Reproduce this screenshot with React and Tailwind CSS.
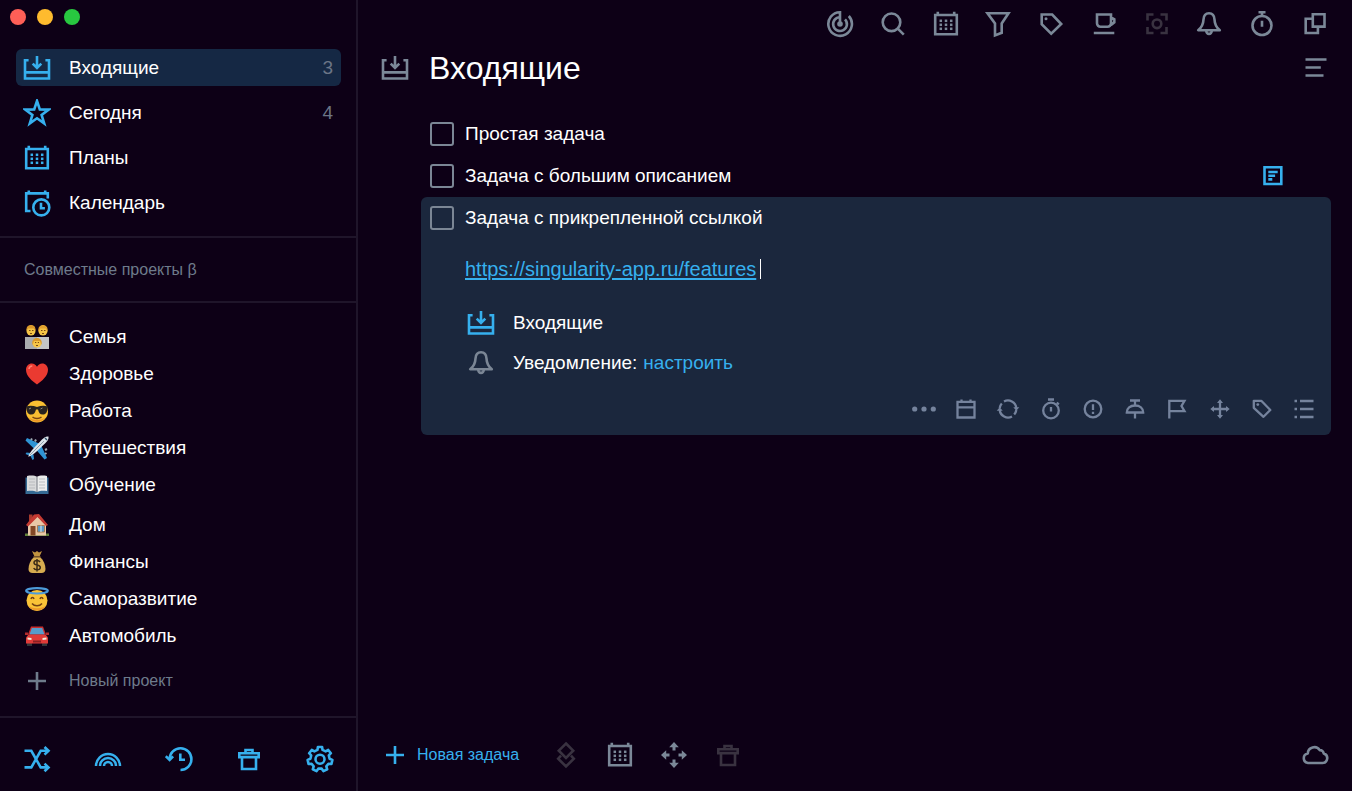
import clsx from "clsx";

function gearPath(cx, cy) {
  const teeth = 7;
  const step = (Math.PI * 2) / teeth;
  const profile = [
    [-0.3, 9.6],
    [-0.19, 12.4],
    [0.19, 12.4],
    [0.3, 9.6],
  ];
  const points = [];
  for (let i = 0; i < teeth; i++) {
    profile.forEach(([offset, r]) => {
      const a = -Math.PI / 2 + i * step + offset * step;
      points.push(`${(cx + r * Math.cos(a)).toFixed(2)} ${(cy + r * Math.sin(a)).toFixed(2)}`);
    });
  }
  return `M${points.join("L")}Z`;
}

function Dots({ xs, ys, size = 2.5 }) {
  return ys.map((y) =>
    xs.map((x) => (
      <rect
        key={`${x}-${y}`}
        x={x - size / 2}
        y={y - size / 2}
        width={size}
        height={size}
        fill="currentColor"
        stroke="none"
      />
    ))
  );
}

// 28px grid
const icons = {
  inbox: (
    <>
      <path d="M5.6 6.3H2V24.500h24V6.300h-3.600M2 18.400h24" />
      <path d="M14 2v12M9.700 9.700l4.300 4.300 4.300-4.300" />
    </>
  ),
  star: (
    <path d="M14 2l2.800 8.500 8.900.1-7.100 5.300 2.600 8.500-7.200-5.100-7.200 5.100 2.600-8.500-7.100-5.300 8.900-.1z" />
  ),
  calendar: (
    <>
      <path d="M3.2 5h21.600v19.300H3.200zM5.800 5V1.800M22.200 5V1.800" />
      <Dots xs={[8.8, 14, 19.2]} ys={[10.8, 14.8, 18.8]} />
    </>
  ),
  calendarClock: (
    <>
      <path d="M7.500 22H3.200V4.400h21.600v5.200M5.800 4.400V1.400M22.200 4.400V1.400" />
      <circle cx="18.300" cy="18.400" r="8" />
      <path d="M18 13.700v5.500h3.900" />
    </>
  ),
  shuffle: (
    <>
      <path d="M1.500 5.800h6.800l9.400 16.600H25M1.500 22.400h6.800l9.400-16.600H25" />
      <path d="M21.500 2l4 3.800-4 3.800M21.500 18.600l4 3.800-4 3.800" />
    </>
  ),
  rainbow: (
    <path d="M2 21a12 12 0 0124 0M6 21a8 8 0 0116 0M10 21a4 4 0 018 0" strokeWidth="2.500" />
  ),
  history: (
    <>
      <path d="M4.600 14A10.900 10.900 0 1115.500 25" />
      <path d="M.8 11.300l3.800 3.700 3.500-3.700M15.300 8.500v6.200h4.700" />
    </>
  ),
  trash: (
    <path d="M4.300 8.300h19.400v3.800H4.300zM7 12.100V24h14V12.100M10.500 8.300V5h7v3.300" />
  ),
  gear: (
    <>
      <path d={gearPath(14, 14.2)} strokeLinejoin="round" />
      <circle cx="14" cy="14.200" r="4.500" />
    </>
  ),
  radar: (
    <>
      <path d="M14 14V2.200A11.800 11.800 0 1022.800 6" />
      <path d="M14 7.200A6.900 6.900 0 1019 9.300" />
      <circle cx="14" cy="14" r="2.800" fill="currentColor" stroke="none" />
    </>
  ),
  search: (
    <>
      <circle cx="12.500" cy="12.300" r="8.800" />
      <path d="M18.800 18.600l6 6" />
    </>
  ),
  filter: <path d="M3.500 3.300h21l-6.800 10.200v9.300l-6.700 2.600V13.500z" />,
  tag: (
    <>
      <path d="M4.700 4.500h10.500l9 9.500-10 9.600-9.500-9.400z" />
      <circle cx="9" cy="8.800" r="1.500" fill="currentColor" stroke="none" />
    </>
  ),
  cup: (
    <path d="M7 4.500h14v8.800a3.500 3.500 0 01-3.500 3.500h-7A3.500 3.500 0 017 13.300zM21 7.500l3.300 1.800v3L21 15M3.800 23h20.500" />
  ),
  focus: (
    <>
      <path d="M4.500 10.500v-6h6M17.500 4.500h6v6M23.500 17v6h-6M10.500 23h-6v-6" />
      <circle cx="14" cy="13.800" r="4.300" />
    </>
  ),
  bell: (
    <>
      <path
        d="M14 3.200c-3.600 0-5.300 2.600-5.500 6.300-.2 5.300-1.600 7.800-5.300 10.800h21.600c-3.700-3-5.100-5.500-5.300-10.800-.2-3.700-1.900-6.300-5.500-6.300z"
        strokeLinejoin="round"
      />
      <path d="M11.300 21a2.700 2.900 0 005.400 0" />
    </>
  ),
  stopwatch: (
    <>
      <circle cx="14" cy="15.500" r="9.500" />
      <path d="M10.500 2.200h7M14 2.500V6M14 10.800v6" />
    </>
  ),
  copy: <path d="M11.800 4.300h11.700v12.300H11.800zM11.800 8.700H4.700V23h12.200v-6.400" />,
  sort: <path d="M4.500 5.500h21M4.500 13.500h15.300M4.500 21.500h18" />,
  plus: <path d="M14 5v18M5 14h18" />,
  layers: <path d="M14 2.500l7.200 7.200-7.200 7.200-7.200-7.200zM9 14.700l-2.800 3 7.800 7.800 7.800-7.800-2.800-3" />,
  move: (
    <g fill="currentColor" stroke="none">
      <path d="M14 1l4.800 5.200h-3.300v3.300h-3V6.200H9.200z" />
      <path d="M14 27l4.800-5.200h-3.300v-3.300h-3v3.300H9.200z" />
      <path d="M1 14l5.200-4.800v3.300h3.300v3H6.200v3.300z" />
      <path d="M27 14l-5.200-4.800v3.300h-3.300v3h3.300v3.300z" />
    </g>
  ),
  cloud: (
    <path
      d="M7 22h14.500a4.900 4.900 0 001.200-9.600 3.700 3.700 0 00-4-3.300 6.500 6.500 0 00-11.900 3.400A4.800 4.800 0 007 22z"
      strokeLinejoin="round"
    />
  ),
  note: <path d="M5.500 5.200h16.800v16.800H5.500zM9.300 10h9.400M9.300 13.700h6.800M9.300 17.400h4" />,
};

// 24px grid, used in the task toolbar
const smallIcons = {
  more: (
    <g fill="currentColor" stroke="none">
      <circle cx="2.700" cy="12" r="2.600" />
      <circle cx="12" cy="12" r="2.600" />
      <circle cx="21.300" cy="12" r="2.600" />
    </g>
  ),
  date: <path d="M3.500 4.800h17v15.700h-17zM3.500 10.300h17M7.500 5V2.500M16.500 5V2.500" />,
  repeat: (
    <>
      <path d="M8 4.500a8.400 8.400 0 0112.300 6.500M16 19.500A8.400 8.400 0 013.700 13M5.800 6.500A8.400 8.400 0 003.700 11M18.200 17.500a8.400 8.400 0 002.100-4.500" />
      <path
        d="M17.300 10.300h6L20.300 13.800zM6.700 13.700h-6l3-3.500z"
        fill="currentColor"
        stroke="none"
      />
    </>
  ),
  timer: (
    <>
      <circle cx="12" cy="13.500" r="7.800" />
      <path d="M9 2.500h6M12 10v4.500M17.800 5.500l2 2" />
    </>
  ),
  priority: (
    <>
      <circle cx="12" cy="12" r="8.300" />
      <path d="M12 7.300v5.700M12 14.800V17" />
    </>
  ),
  pin: <path d="M7 3.500h10M12 3.500v5M3.800 15.500c0-4.200 3.400-7 8.200-7s8.200 2.800 8.200 7zM12 15.500v6" />,
  flag: <path d="M4.300 21.500V3.800h15.200l-3 5.200 3 5.200H4.300" />,
  cross: (
    <>
      <path d="M12 4v16M4 12h16" />
      <path
        d="M12 2.300l3 3.700H9zM12 21.700L15 18H9zM2.300 12L6 9v6zM21.700 12L18 9v6z"
        fill="currentColor"
        stroke="none"
      />
    </>
  ),
  label: (
    <>
      <path d="M3.800 3.800h7.500l9 9.200-6.800 6.800-9.700-9z" strokeLinejoin="round" />
      <circle cx="7.800" cy="7.600" r="1.400" fill="currentColor" stroke="none" />
    </>
  ),
  list: <path d="M8 4h13.500M8 12h13.500M8 20h13.500M2.500 4H5M2.500 12H5M2.500 20H5" />,
};

// 24px grid
const emoji = {
  family: (
    <>
      <path d="M0 12h24v12H0z" fill="#a9abae" />
      <path d="M12 12h12v12H12z" fill="#c3c4c6" />
      <circle cx="6" cy="6" r="4.500" fill="#f6c446" />
      <path d="M1.500 6C1 1.500 3.500 0 6 0s5 1.500 4.500 6L9 3.500H3z" fill="#d9982b" />
      <circle cx="18" cy="6" r="4.500" fill="#f6c446" />
      <path d="M13.500 7c-.8-5 1.500-7 4.500-7s5.300 2 4.500 7L21 3.500h-6z" fill="#e2a22f" />
      <path d="M4 5.500h1.500M7 5.500h1.500M16 5.500h1.500M19 5.500h1.500M5 8.500h2M17 8.500h2" stroke="#7b4a12" />
      <circle cx="12" cy="18" r="4.500" fill="#f6c446" />
      <path d="M7.500 20c-1-5 1.500-7 4.500-7s5.500 2 4.500 7L15 16H9z" fill="#d9982b" />
      <path d="M10 17.500h1.300M12.800 17.500H14M11 20.500h2" stroke="#7b4a12" />
    </>
  ),
  heart: (
    <>
      <path
        d="M12 22.500C7 19 1 14 1 7.800 1 4 3.600 1.500 6.800 1.500c2.300 0 4.200 1.300 5.200 3.300 1-2 2.900-3.300 5.200-3.300C20.400 1.500 23 4 23 7.800 23 14 17 19 12 22.500z"
        fill="#ea3a31"
      />
      <path d="M4 7c.3-2 1.500-3 3.300-3" stroke="#ff8272" strokeWidth="1.600" fill="none" />
    </>
  ),
  sunglasses: (
    <>
      <circle cx="12" cy="12.500" r="11" fill="#f9bf32" />
      <path d="M3 18a11 11 0 0018 0c-4 4-14 4-18 0z" fill="#ec9528" />
      <path
        d="M1 7.500c4-1 7-.8 11 .5 4-1.300 7-1.500 11-.5l-.5 2.500c-.6 4-2 5.500-4.700 5.500-3 0-4-2-4.800-5h-2c-.8 3-1.800 5-4.800 5C3.500 15.500 2 14 1.500 10z"
        fill="#28231f"
      />
      <path d="M4 10l2-1M15.500 10l2-1" stroke="#8b8580" />
      <path d="M7.500 18c2.500 2 6.500 2 9 0" stroke="#7b4413" strokeWidth="1.500" fill="none" />
    </>
  ),
  plane: (
    <>
      <path d="M15 8L2 2 .5 4.500l9.500 9zM16 9l6 13-2.500 1.500-8.500-10z" fill="#2f94d5" />
      <path d="M6 17l-4.500-.5L.5 18l5 2 2 4 1.500-1-.5-4.500z" fill="#318fce" />
      <path
        d="M23.500.5c-2.500-.5-4.700 1-6.500 3L8 13c-2 2.300-4 5-4.800 7.800C6 20 8.700 18 11 16l9.500-9c2-1.800 3.500-4 3-6.500z"
        fill="#dce4eb"
      />
      <path d="M5 19L19 5" stroke="#8f9dab" />
      <path d="M20 2l2 2" stroke="#31506b" strokeWidth="1.500" />
      <path d="M7 2.500L6 4M11 3.500l-1 2M22 13l-2 1M21.500 17l-1.500 1" stroke="#9da8b2" strokeWidth="2" />
    </>
  ),
  book: (
    <>
      <path d="M.5 4.500h23V21H.5z" fill="#356a94" />
      <path d="M2 3c4-.8 8-.5 10 .8V19c-3-1.500-6-1.500-10-1z" fill="#d9dadb" />
      <path d="M22 3c-4-.8-8-.5-10 .8V19c3-1.500 6-1.500 10-1z" fill="#eceded" />
      <path d="M12 4v15" stroke="#777d84" />
      <path d="M4 6h6M4 9h6M4 12h6M4 15h6M14 6h6M14 9h6M14 12h6M14 15h6" stroke="#b1b4b7" strokeWidth=".8" />
    </>
  ),
  house: (
    <>
      <path d="M0 20.500h24V23H0z" fill="#62813a" />
      <path d="M4 1.500h3.500V9H4z" fill="#a63a2d" />
      <path d="M3 10l9-7 9 9v10.500H3z" fill="#e9c8a7" />
      <path d="M1 12L9 1.500l5-.5 9 11-2 1-8.500-9L3 13.500z" fill="#c43a32" />
      <path d="M5.500 13h5v9.500h-5z" fill="#824826" />
      <path d="M12.500 12.500h7V19h-7z" fill="#5d9bc4" stroke="#a67d57" />
      <path d="M16 12.500V19" stroke="#dcecf6" />
    </>
  ),
  money: (
    <>
      <path d="M7 1l3 1.500L12 1l2 1.500L17 1l-2.500 5.500h-5z" fill="#c29440" />
      <path
        d="M9 7h6c3.500 3 5.500 7.500 5.500 12 0 2.800-1.500 4-4 4h-9c-2.500 0-4-1.200-4-4C3.500 14.500 5.500 10 9 7z"
        fill="#d7ac50"
      />
      <path d="M8.500 6.800h7" stroke="#77542a" strokeWidth="1.500" />
      <path
        d="M15 12c-.7-1.200-1.800-1.500-3-1.500-1.700 0-3 .8-3 2.200 0 3.300 6.300 1.500 6.300 4.800 0 1.500-1.500 2.300-3.200 2.300-1.500 0-2.800-.5-3.400-1.800M12 9v12.500"
        stroke="#3b2c17"
        strokeWidth="1.500"
        fill="none"
      />
    </>
  ),
  halo: (
    <>
      <circle cx="12" cy="13.500" r="10.500" fill="#fac337" />
      <path d="M3 18.500a10.500 10.500 0 0018 0c-4 3.500-14 3.500-18 0z" fill="#ee9a2b" />
      <ellipse cx="12" cy="3.800" rx="10.800" ry="2.700" fill="none" stroke="#4d9bda" strokeWidth="2.200" />
      <path
        d="M6 12c.5-2 2.500-2 3 0M15 12c.5-2 2.500-2 3 0M7 16.500c2.500 3 7.500 3 10 0"
        stroke="#744112"
        strokeWidth="1.500"
        fill="none"
      />
    </>
  ),
  car: (
    <>
      <path d="M2 17h5v5H2zM17 17h5v5h-5z" fill="#33363b" />
      <path d="M6 2.500h12l3 8H3z" fill="#c92c2c" />
      <path d="M6.800 4h10.400l2.300 6.500h-15z" fill="#579ccb" />
      <path d="M0 8.500h3V11H0zM21 8.500h3V11h-3z" fill="#b32b2c" />
      <path d="M3.500 10.500h17l2.500 3v6H1v-6z" fill="#e13a38" />
      <path d="M2.500 13.500l4 .5v2l-4-.5zM21.500 13.500l-4 .5v2l4-.5z" fill="#f5ead6" />
      <path d="M8 16.500h8v2H8z" fill="#8b2023" />
    </>
  ),
};

function Icon({ name, className }) {
  return (
    <svg
      viewBox="0 0 28 28"
      fill="none"
      stroke="currentColor"
      strokeWidth="2.600"
      aria-hidden="true"
      className={clsx("size-7 shrink-0", className)}
    >
      {icons[name]}
    </svg>
  );
}

function SmallIcon({ name }) {
  return (
    <svg
      viewBox="0 0 24 24"
      fill="none"
      stroke="currentColor"
      strokeWidth="2.300"
      aria-hidden="true"
      className="size-6 shrink-0"
    >
      {smallIcons[name]}
    </svg>
  );
}

const navItems = [
  { label: "Входящие", icon: "inbox", count: 3, active: true },
  { label: "Сегодня", icon: "star", count: 4 },
  { label: "Планы", icon: "calendar" },
  { label: "Календарь", icon: "calendarClock" },
];

const projectGroups = [
  [
    { label: "Семья", icon: "family" },
    { label: "Здоровье", icon: "heart" },
    { label: "Работа", icon: "sunglasses" },
    { label: "Путешествия", icon: "plane" },
    { label: "Обучение", icon: "book" },
  ],
  [
    { label: "Дом", icon: "house" },
    { label: "Финансы", icon: "money" },
    { label: "Саморазвитие", icon: "halo" },
    { label: "Автомобиль", icon: "car" },
  ],
];

const sidebarActions = ["shuffle", "rainbow", "history", "trash", "gear"];

const toolbar = [
  "radar",
  "search",
  "calendar",
  "filter",
  "tag",
  "cup",
  "focus",
  "bell",
  "stopwatch",
  "copy",
];

const taskActions = [
  "more",
  "date",
  "repeat",
  "timer",
  "priority",
  "pin",
  "flag",
  "cross",
  "label",
  "list",
];

const footerActions = [
  { icon: "layers", disabled: true },
  { icon: "calendar" },
  { icon: "move" },
  { icon: "trash", disabled: true },
];

function Sidebar() {
  return (
    <aside className="w-[358px] shrink-0 flex flex-col border-r-2 border-[#1f152a]">
      <div className="flex gap-[11px] px-[10px] pt-[9px] pb-6">
        <span className="size-4 rounded-full bg-[#fe5f57]" />
        <span className="size-4 rounded-full bg-[#febb2e]" />
        <span className="size-4 rounded-full bg-[#28c740]" />
      </div>

      <nav className="flex flex-col gap-2 pl-4 pr-[15px] pb-[15px]">
        {navItems.map((item) => (
          <a
            key={item.label}
            href="#"
            className={clsx(
              "flex items-center h-[37px] pl-[7px] pr-2 rounded-md",
              item.active && "bg-[#152844]"
            )}
          >
            <Icon name={item.icon} className="text-[#36b0ee]" />
            <span className="ml-[18px] flex-1">{item.label}</span>
            {item.count && <span className="text-[#6b7586]">{item.count}</span>}
          </a>
        ))}
      </nav>

      <div className="flex items-center h-[63px] px-6 border-y-2 border-[#1f152a] box-content text-base text-[#6e7b8b]">
        Совместные проекты β
      </div>

      <div className="flex flex-col gap-[3px] pt-[15px]">
        {projectGroups.map((group, i) => (
          <ul key={i}>
            {group.map((project) => (
              <li key={project.label}>
                <a href="#" className="flex items-center h-[37px] px-[25px]">
                  <svg viewBox="0 0 24 24" aria-hidden="true" className="size-6 shrink-0">
                    {emoji[project.icon]}
                  </svg>
                  <span className="ml-5">{project.label}</span>
                </a>
              </li>
            ))}
          </ul>
        ))}
      </div>
      <button
        type="button"
        className="flex items-center h-[37px] mt-2 px-[23px] text-base text-[#6e7b8b]"
      >
        <Icon name="plus" />
        <span className="ml-[18px]">Новый проект</span>
      </button>

      <div className="mt-auto flex justify-between pt-[27px] pb-[18px] pl-[23px] pr-[22px] border-t-2 border-[#1f152a] text-[#36b0ee]">
        {sidebarActions.map((name) => (
          <button key={name} type="button" aria-label={name}>
            <Icon name={name} />
          </button>
        ))}
      </div>
    </aside>
  );
}

function TaskRow({ id, title, children }) {
  return (
    <div className="flex items-center h-[42px] pl-[9px] pr-[44px]">
      <input
        id={id}
        type="checkbox"
        className="appearance-none size-6 shrink-0 rounded-[3px] border-2 border-[#7b8695]"
      />
      <label htmlFor={id} className="ml-[11px] flex-1">
        {title}
      </label>
      {children}
    </div>
  );
}

function OpenTask() {
  return (
    <div className="rounded-md bg-[#1b273d]">
      <TaskRow id="task-3" title="Задача с прикрепленной ссылкой" />
      <div className="pl-11 pr-[15px] pb-[14px]">
        <div className="flex items-center h-6 mt-[18px]">
          <a href="#" className="text-xl leading-6 text-[#36b0ee] underline underline-offset-2">
            https://singularity-app.ru/features
          </a>
          <span className="ml-1 w-px h-5 bg-white" />
        </div>
        <div className="flex items-center h-10 mt-[22px]">
          <Icon name="inbox" className="ml-0.5 text-[#36b0ee]" />
          <span className="ml-[18px]">Входящие</span>
        </div>
        <div className="flex items-center h-10">
          <Icon name="bell" className="ml-0.5 text-[#7b8695]" />
          <span className="ml-[18px]">Уведомление:</span>
          <button type="button" className="ml-[6px] text-[#36b0ee]">
            настроить
          </button>
        </div>
        <div className="flex justify-between w-[404px] ml-auto mt-[14px] text-[#75839d]">
          {taskActions.map((name) => (
            <button key={name} type="button" aria-label={name}>
              <SmallIcon name={name} />
            </button>
          ))}
        </div>
      </div>
    </div>
  );
}

export default function App() {
  return (
    <div className="flex min-h-screen bg-[#0d0016] text-white text-[19px] leading-6 font-['Liberation_Sans',Arial,sans-serif]">
      <Sidebar />

      <main className="flex-1 min-w-0 flex flex-col">
        <div className="flex justify-between w-[503px] ml-auto mr-[23px] pt-[10px] text-[#7b8898]">
          {toolbar.map((name) => (
            <button
              key={name}
              type="button"
              aria-label={name}
              className={clsx(name === "focus" && "text-[#393240]")}
            >
              <Icon name={name} />
            </button>
          ))}
        </div>

        <header className="flex items-center h-10 mt-[10px] pl-[23px] pr-[23px] text-[#7b8898]">
          <Icon name="inbox" />
          <h1 className="ml-5 flex-1 text-[32px] leading-10 text-white">Входящие</h1>
          <button type="button" aria-label="sort">
            <Icon name="sort" />
          </button>
        </header>

        <section className="mt-[25px] pl-[63px] pr-[21px]">
          <TaskRow id="task-1" title="Простая задача" />
          <TaskRow id="task-2" title="Задача с большим описанием">
            <Icon name="note" className="text-[#36b0ee]" />
          </TaskRow>
          <OpenTask />
        </section>

        <footer className="mt-auto flex items-center h-[72px] pl-[23px] pr-[23px] text-[#7b8898]">
          <button type="button" className="flex items-center text-base text-[#36b0ee]">
            <Icon name="plus" />
            <span className="ml-2">Новая задача</span>
          </button>
          <div className="flex gap-[26px] ml-[33px]">
            {footerActions.map((action) => (
              <button
                key={action.icon}
                type="button"
                aria-label={action.icon}
                disabled={action.disabled}
                className={clsx(action.disabled && "text-[#393240]")}
              >
                <Icon name={action.icon} />
              </button>
            ))}
          </div>
          <button type="button" aria-label="cloud" className="ml-auto">
            <Icon name="cloud" />
          </button>
        </footer>
      </main>
    </div>
  );
}
